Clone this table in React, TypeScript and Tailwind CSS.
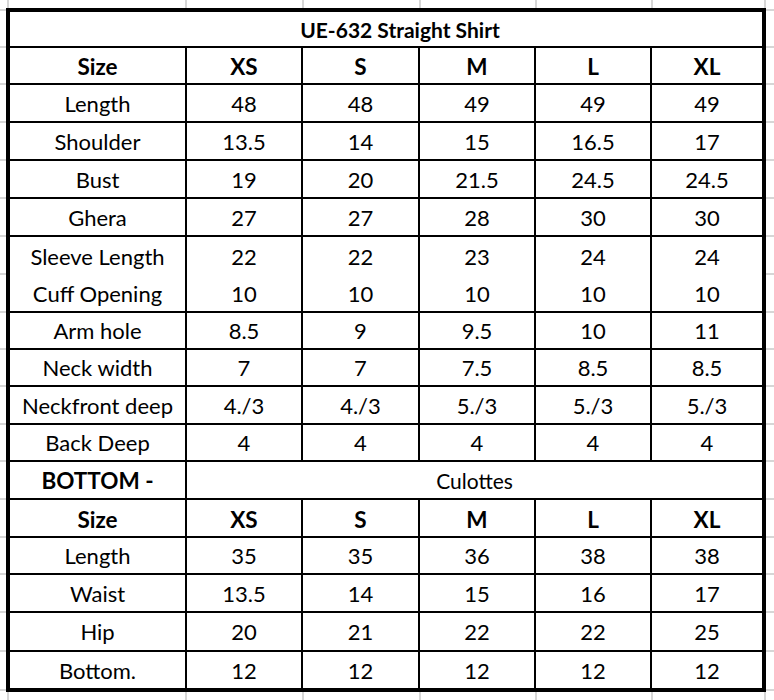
import React from 'react';

type Row = {
  kind: 'data' | 'head' | 'section';
  cells: string[];
  h: string;
  noLine?: boolean;
};

const COLW = ['w-[177px]', 'w-[116px]', 'w-[117px]', 'w-[116px]', 'w-[116px]', 'w-[110px]'];

const rows: Row[] = [
  { kind: 'head', cells: ['Size', 'XS', 'S', 'M', 'L', 'XL'], h: 'h-[37px]' },
  { kind: 'data', cells: ['Length', '48', '48', '49', '49', '49'], h: 'h-[38px]' },
  { kind: 'data', cells: ['Shoulder', '13.5', '14', '15', '16.5', '17'], h: 'h-[38px]' },
  { kind: 'data', cells: ['Bust', '19', '20', '21.5', '24.5', '24.5'], h: 'h-[38px]' },
  { kind: 'data', cells: ['Ghera', '27', '27', '28', '30', '30'], h: 'h-[38px]' },
  { kind: 'data', cells: ['Sleeve Length', '22', '22', '23', '24', '24'], h: 'h-[38px]', noLine: true },
  { kind: 'data', cells: ['Cuff Opening', '10', '10', '10', '10', '10'], h: 'h-[38px]' },
  { kind: 'data', cells: ['Arm hole', '8.5', '9', '9.5', '10', '11'], h: 'h-[37px]' },
  { kind: 'data', cells: ['Neck width', '7', '7', '7.5', '8.5', '8.5'], h: 'h-[37px]' },
  { kind: 'data', cells: ['Neckfront deep', '4./3', '4./3', '5./3', '5./3', '5./3'], h: 'h-[38px]' },
  { kind: 'data', cells: ['Back Deep', '4', '4', '4', '4', '4'], h: 'h-[37px]' },
  { kind: 'section', cells: ['BOTTOM -', 'Culottes'], h: 'h-[38px]' },
  { kind: 'head', cells: ['Size', 'XS', 'S', 'M', 'L', 'XL'], h: 'h-[38px]' },
  { kind: 'data', cells: ['Length', '35', '35', '36', '38', '38'], h: 'h-[37px]' },
  { kind: 'data', cells: ['Waist', '13.5', '14', '15', '16', '17'], h: 'h-[38px]' },
  { kind: 'data', cells: ['Hip', '20', '21', '22', '22', '25'], h: 'h-[39px]' },
  { kind: 'data', cells: ['Bottom.', '12', '12', '12', '12', '12'], h: 'h-[36px]', noLine: true },
];

const STRIP_H = ['h-[3px]', 'h-[37px]', 'h-[37px]', 'h-[38px]', 'h-[38px]', 'h-[38px]', 'h-[38px]', 'h-[38px]', 'h-[38px]', 'h-[37px]', 'h-[37px]', 'h-[38px]', 'h-[37px]', 'h-[38px]', 'h-[38px]', 'h-[37px]', 'h-[38px]', 'h-[39px]', 'h-[39px]'];

function Strip({ w }: { w: string }) {
  return (
    <div className={`${w} flex flex-col shrink-0`}>
      {STRIP_H.map((h, i) => (
        <div key={i} className={`${h} shrink-0 border-b-2 border-[#d6d6d6]`} />
      ))}
    </div>
  );
}

function HStrip() {
  return (
    <div className="flex h-[8px] shrink-0">
      <div className="w-[7px] shrink-0" />
      <div className="w-[178px] shrink-0 border-l-2 border-[#d6d6d6]" />
      <div className="w-[117px] shrink-0 border-l-2 border-[#d6d6d6]" />
      <div className="w-[117px] shrink-0 border-l-2 border-[#d6d6d6]" />
      <div className="w-[116px] shrink-0 border-l-2 border-[#d6d6d6]" />
      <div className="w-[116px] shrink-0 border-l-2 border-[#d6d6d6]" />
      <div className="w-[113px] shrink-0 border-l-2 border-[#d6d6d6]" />
      <div className="w-[10px] shrink-0 border-l-2 border-[#d6d6d6]" />
    </div>
  );
}

export default function App() {
  return (
    <div className="w-[774px] h-[700px] bg-white flex flex-col overflow-hidden text-black font-['Lato','Liberation_Sans',sans-serif]">
      <HStrip />
      <div className="flex h-[684px] shrink-0">
        <Strip w="w-[6px]" />
        <div className="w-[760px] h-[684px] shrink-0 border-4 border-black flex flex-col">
          <div className="h-[36px] shrink-0 border-b-2 border-black flex items-center justify-center pl-[28px] text-[21px] font-bold leading-none">
            UE-632 Straight Shirt
          </div>
          {rows.map((r, i) => (
            <div
              key={i}
              className={`${r.h} shrink-0 flex ${r.noLine ? '' : 'border-b-2 border-black'}`}
            >
              {r.kind === 'section' ? (
                <>
                  <div className="w-[177px] shrink-0 border-r-2 border-black flex items-center justify-center pt-[3px] text-[22.5px] font-bold leading-none">
                    {r.cells[0]}
                  </div>
                  <div className="w-[575px] shrink-0 flex items-center justify-center pt-[1px] text-[21px] leading-none">
                    {r.cells[1]}
                  </div>
                </>
              ) : (
                r.cells.map((c, j) => (
                  <div
                    key={j}
                    className={`${COLW[j]} shrink-0 flex items-center justify-center leading-none ${
                      j < 5 ? 'border-r-2 border-black' : ''
                    } ${r.kind === 'head' ? 'font-bold text-[22.5px] pt-[4px]' : 'text-[22px] pt-[1px]'}`}
                  >
                    {c}
                  </div>
                ))
              )}
            </div>
          ))}
        </div>
        <Strip w="w-[8px]" />
      </div>
      <HStrip />
    </div>
  );
}
